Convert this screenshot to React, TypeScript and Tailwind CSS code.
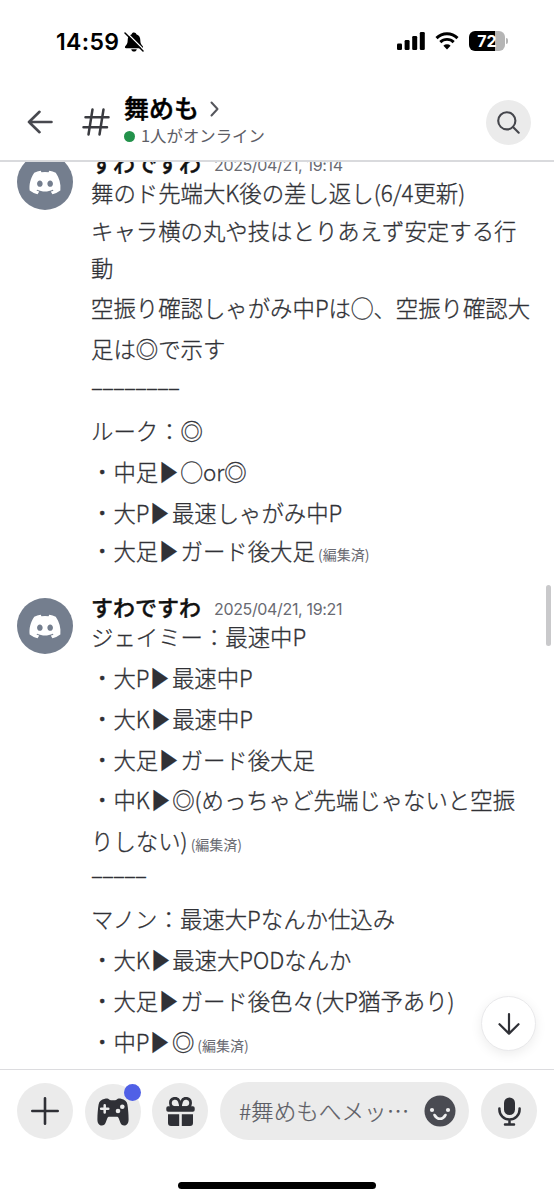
import type { ReactNode } from 'react';
import { FaDiscord } from 'react-icons/fa';

type Line = { text: string; gap: string; edited?: boolean; rule?: boolean };
type Message = { id: number; author: string; date: string; className: string; lines: Line[] };

const messages: Message[] = [
  {
    id: 1,
    author: 'すわですわ',
    date: '2025/04/21, 19:14',
    className: '-mt-2',
    lines: [
      { text: '舞のド先端大K後の差し返し(6/4更新)', gap: '' },
      { text: 'キャラ横の丸や技はとりあえず安定する行', gap: 'mt-[8px]' },
      { text: '動', gap: 'mt-[7px]' },
      { text: '空振り確認しゃがみ中Pは◯、空振り確認大', gap: 'mt-[10px]' },
      { text: '足は◎で示す', gap: 'mt-[11px]' },
      { text: '––––––––', gap: 'mt-[8px]', rule: true },
      { text: 'ルーク：◎', gap: 'mt-[14px]' },
      { text: '・中足▶◯or◎', gap: 'mt-[11px]' },
      { text: '・大P▶最速しゃがみ中P', gap: 'mt-[11px]' },
      { text: '・大足▶ガード後大足', gap: 'mt-[8px]', edited: true },
    ],
  },
  {
    id: 2,
    author: 'すわですわ',
    date: '2025/04/21, 19:21',
    className: 'mt-[33px]',
    lines: [
      { text: 'ジェイミー：最速中P', gap: '' },
      { text: '・大P▶最速中P', gap: 'mt-[11px]' },
      { text: '・大K▶最速中P', gap: 'mt-[11px]' },
      { text: '・大足▶ガード後大足', gap: 'mt-[11px]' },
      { text: '・中K▶◎(めっちゃど先端じゃないと空振', gap: 'mt-[10px]' },
      { text: 'りしない)', gap: 'mt-[11px]', edited: true },
      { text: '–––––', gap: 'mt-[4px]', rule: true },
      { text: 'マノン：最速大Pなんか仕込み', gap: 'mt-[14px]' },
      { text: '・大K▶最速大PODなんか', gap: 'mt-[11px]' },
      { text: '・大足▶ガード後色々(大P猶予あり)', gap: 'mt-[11px]' },
      { text: '・中P▶◎', gap: 'mt-[11px]', edited: true },
    ],
  },
];

function StatusBar() {
  return (
    <div className="flex h-[84px] shrink-0 items-start justify-between pl-14 pr-[46px] pt-[27px] text-black">
      <div className="flex h-7 items-center gap-[5px]">
        <span className="mt-px font-[Inter] text-[23px] font-semibold leading-7 tracking-[0.35px]">14:59</span>
        <svg className="mt-px h-[22px] w-5" viewBox="0 0 20 22" fill="none">
          <path d="M10 1.500c-1.300 0-2.100.7-2.300 1.700C4.800 4.200 3.700 6.300 3.700 9c0 3.600-1 4.600-2.300 5.900-.8.8-.6 2.300.7 2.300h15.800c1.300 0 1.500-1.500.7-2.300-1.300-1.300-2.300-2.300-2.300-5.900 0-2.700-1.100-4.800-4-5.800-.2-1-1-1.700-2.300-1.700Z" fill="currentColor" />
          <path d="M7.200 18.300h5.600c-.3 1.400-1.400 2.300-2.800 2.300s-2.500-.9-2.800-2.300Z" fill="currentColor" />
          <path d="M2 1 20 19" stroke="#fff" strokeWidth="1.400" />
          <path d="M1 2 19 20" stroke="currentColor" strokeWidth="1.500" strokeLinecap="round" />
        </svg>
      </div>
      <div className="flex h-7 items-center">
        <svg className="h-[18px] w-7" viewBox="0 0 28 18" fill="currentColor">
          <rect x="0" y="11.500" width="5" height="6.500" rx="1.300" />
          <rect x="7.600" y="8" width="5" height="10" rx="1.300" />
          <rect x="15.200" y="4" width="5" height="14" rx="1.300" />
          <rect x="22.800" y="0" width="5" height="18" rx="1.300" />
        </svg>
        <svg className="ml-[10px] h-[18px] w-6" viewBox="0 0 24 18" fill="none" stroke="currentColor">
          <path d="M1.500 6.100a15 15 0 0 1 21 0" strokeWidth="3" />
          <path d="M5.300 10.100a9.600 9.600 0 0 1 13.400 0" strokeWidth="2.900" />
          <path d="M12 17.500 8.400 13.800a5.200 5.200 0 0 1 7.200 0Z" fill="currentColor" stroke="none" />
        </svg>
        <div className="ml-[10px] flex h-5 w-9 items-center justify-center rounded-[6px] bg-[linear-gradient(90deg,#000_72%,#b5b5b5_72%)]">
          <span className="font-[Inter] text-[16px] font-bold leading-5 text-white">72</span>
        </div>
        <div className="ml-px h-[6px] w-[2px] rounded-r-full bg-[#b5b5b5]" />
      </div>
    </div>
  );
}

function Header() {
  return (
    <header className="flex h-[78px] shrink-0 items-start border-b-2 border-[#d9dadd] pl-[27px] pr-[23px]">
      <svg className="mt-[26px] h-6 w-[26px]" viewBox="0 0 26 24" fill="none" stroke="#48494f" strokeWidth="2.600" strokeLinecap="round" strokeLinejoin="round">
        <path d="M24.500 12H2M12.500 1.800 2 12l10.500 10.200" />
      </svg>
      <svg className="ml-[29px] mt-6 h-7 w-7" viewBox="0 0 28 28" fill="none" stroke="#3a3b40" strokeWidth="2.500" strokeLinecap="round">
        <path d="M3.500 9.200H26.500M1.500 19.200H25M10.500 1.500 6.500 26.500M21.500 1.500 17.500 26.500" />
      </svg>
      <div className="ml-[14px] mt-[7px] flex flex-col">
        <div className="flex h-8 items-center">
          <h1 className="text-[25px] font-medium leading-8 text-black [-webkit-text-stroke:0.5px_#000]">舞めも</h1>
          <svg className="ml-[11px] mt-[3px] h-4 w-[9px]" viewBox="0 0 9 16" fill="none" stroke="#55565c" strokeWidth="2" strokeLinecap="round" strokeLinejoin="round">
            <path d="m1.500 1.500 6 6.500-6 6.500" />
          </svg>
        </div>
        <div className="flex h-6 items-center gap-[6px]">
          <span className="mt-[2px] h-[11px] w-[11px] rounded-full bg-[#23924b]" />
          <span className="text-[16.400px] leading-6 text-[#5d5e66]">1人がオンライン</span>
        </div>
      </div>
      <button className="ml-auto mt-4 flex h-[45px] w-[45px] items-center justify-center rounded-full bg-[#ebebeb]" aria-label="検索">
        <svg className="h-[23px] w-[23px]" viewBox="0 0 23 23" fill="none" stroke="#45464c" strokeWidth="2.100" strokeLinecap="round">
          <circle cx="9.800" cy="9.800" r="8.600" />
          <path d="m16 16 5.700 5.700" />
        </svg>
      </button>
    </header>
  );
}

// the arrow glyph is drawn narrower than its full-width cell
function LineText({ text }: { text: string }) {
  const parts = text.split('▶');
  return (
    <>
      {parts.map((part, i) => (
        <span key={i}>
          {i > 0 && <span className="inline-block -translate-x-[0.5px] scale-x-[0.84]">▶</span>}
          {part}
        </span>
      ))}
    </>
  );
}

function MessageItem({ message }: { message: Message }) {
  return (
    <article className={`flex items-start pl-[17px] ${message.className}`}>
      <div className="flex h-14 w-14 shrink-0 items-center justify-center rounded-full bg-[#747e8e]">
        <FaDiscord className="h-[27px] w-[34px] text-white" />
      </div>
      <div className="-mt-[7px] ml-[18px] whitespace-nowrap">
        <div className="flex h-[30px] items-center">
          <span className="text-[22px] font-medium leading-[30px] text-[#111] [-webkit-text-stroke:0.4px_#111]">{message.author}</span>
          <span className="ml-[13px] mt-[5px] font-[Inter] text-[16px] tracking-[-0.350px] text-[#696a72]">{message.date}</span>
        </div>
        {message.lines.map((line, i) => (
          <p key={i} className={`h-[30px] text-[22.4px] font-light leading-[30px] text-[#303136] [-webkit-text-stroke:0.3px_#303136] ${line.rule ? 'tracking-[-0.9px]' : ''} ${line.gap}`}>
            <LineText text={line.text} />
            {line.edited && <span className="ml-[3px] text-[14px] font-normal text-[#696a72] [-webkit-text-stroke:0]">(編集済)</span>}
          </p>
        ))}
      </div>
    </article>
  );
}

function RoundButton({ label, children, className = '' }: { label: string; children: ReactNode; className?: string }) {
  return (
    <button aria-label={label} className={`relative flex h-14 w-14 shrink-0 items-center justify-center rounded-full bg-[#ebebeb] text-[#2f3036] ${className}`}>
      {children}
    </button>
  );
}

function Composer() {
  return (
    <footer className="flex h-[131px] shrink-0 flex-col border-t border-[#dcdcdf]">
      <div className="flex items-start pl-[17px] pt-3">
        <RoundButton label="追加" className="mt-px">
          <svg className="h-7 w-7" viewBox="0 0 28 28" fill="none" stroke="currentColor" strokeWidth="2.600" strokeLinecap="round">
            <path d="M14 1.300v25.400M1.300 14h25.400" />
          </svg>
        </RoundButton>
        <RoundButton label="アクティビティ" className="ml-3 mt-[2px]">
          <svg className="h-7 w-8" viewBox="0 0 32 28">
            <path d="M8 .8C10 .2 11.500.9 12.500 1.800c.4.300.8.400 1.300.400h4.400c.5 0 .9-.1 1.300-.4C20.500.9 22 .2 24 .8c3.800 1 5.800 2.400 6.400 5.700.7 4 1.200 10 1.200 15 0 3.500-1.500 6-4.300 6-2.200 0-3.300-1.200-4-3L21.600 20c-.4-.9-1-1.300-2-1.300h-7.200c-1 0-1.600.4-2 1.300L8.700 24.500c-.7 1.800-1.800 3-4 3-2.800 0-4.300-2.500-4.300-6 0-5 .5-11 1.200-15C2.200 3.200 4.200 1.800 8 .8Z" fill="currentColor" />
            <path d="M7.700 7.200v7.200M4.100 10.800h7.200" stroke="#ebebeb" strokeWidth="2.500" strokeLinecap="round" />
            <circle cx="25.300" cy="8.800" r="2.300" fill="#ebebeb" />
            <circle cx="21" cy="13" r="2.300" fill="#ebebeb" />
          </svg>
          <span className="absolute right-0 top-0 h-[17px] w-[17px] rounded-full bg-[#5060e6]" />
        </RoundButton>
        <RoundButton label="ギフト" className="ml-[11px] mt-px">
          <svg className="h-[29px] w-[29px]" viewBox="0 0 29 29">
            <g fill="none" stroke="currentColor" strokeWidth="2.700">
              <path d="M14.500 10.500H8.500a4.600 4.600 0 1 1 4.800-6.200c.7 1.900 1.200 4.200 1.200 6.200Z" />
              <path d="M14.500 10.500h6a4.600 4.600 0 1 0-4.800-6.200c-.7 1.900-1.200 4.200-1.200 6.200Z" />
            </g>
            <rect x="0.300" y="9.300" width="28.400" height="5.500" rx="1.800" fill="currentColor" />
            <path d="M2 17.200h11.200V29H5a3 3 0 0 1-3-3ZM15.800 17.200H27V26a3 3 0 0 1-3 3h-8.200Z" fill="currentColor" />
          </svg>
        </RoundButton>
        <div className="ml-3 flex h-[58px] w-[249px] shrink-0 items-center rounded-full bg-[#ebebeb] pl-[19px] pr-[13px]">
          <span className="whitespace-nowrap text-[22.600px] font-light leading-[30px] text-[#5c5d65] [-webkit-text-stroke:0.2px_#5c5d65]">#舞めもへメッ…</span>
          <svg className="ml-auto h-8 w-8 shrink-0" viewBox="0 0 32 32">
            <circle cx="16" cy="16" r="15.500" fill="#4a4b52" />
            <circle cx="8" cy="15" r="2.100" fill="#f0f0f0" />
            <circle cx="24" cy="15" r="2.100" fill="#f0f0f0" />
            <path d="M10.500 20c2.800 5 8.200 5 11 0" fill="none" stroke="#f0f0f0" strokeWidth="2.600" strokeLinecap="round" />
          </svg>
        </div>
        <RoundButton label="ボイスメッセージ" className="ml-3 mt-px">
          <svg className="h-[29px] w-[23px]" viewBox="0 0 23 29">
            <rect x="6" y="0.500" width="11" height="17.500" rx="5.500" fill="currentColor" />
            <path d="M1.400 11.500v1a10.100 10.100 0 0 0 20.200 0v-1M11.500 22.500v5M7 27.500h9" fill="none" stroke="currentColor" strokeWidth="2.500" strokeLinecap="round" />
          </svg>
        </RoundButton>
      </div>
      <div className="mt-auto mb-[11px] h-[7px] w-[198px] self-center rounded-full bg-black" />
    </footer>
  );
}

export default function App() {
  return (
    <div className="flex h-[1200px] w-[554px] flex-col overflow-hidden bg-white font-['Noto_Sans_CJK_JP',sans-serif]">
      <StatusBar />
      <Header />
      <main className="relative min-h-0 flex-1 overflow-hidden">
        {messages.map((message) => (
          <MessageItem key={message.id} message={message} />
        ))}
        <div className="absolute right-[3px] top-[423px] h-[61px] w-[5px] rounded-full bg-[#c9c9cb]" />
        <button
          className="absolute bottom-[18px] right-[18px] flex h-[55px] w-[55px] items-center justify-center rounded-full border border-[#e9e9eb] bg-white shadow-[0_3px_12px_rgba(0,0,0,0.08)]"
          aria-label="最新へ移動"
        >
          <svg className="h-[22px] w-[22px]" viewBox="0 0 22 22" fill="none" stroke="#2f3036" strokeWidth="2.200" strokeLinecap="round" strokeLinejoin="round">
            <path d="M11 1.200v19.200M1.500 11.200l9.500 9.400 9.500-9.400" />
          </svg>
        </button>
      </main>
      <Composer />
    </div>
  );
}
